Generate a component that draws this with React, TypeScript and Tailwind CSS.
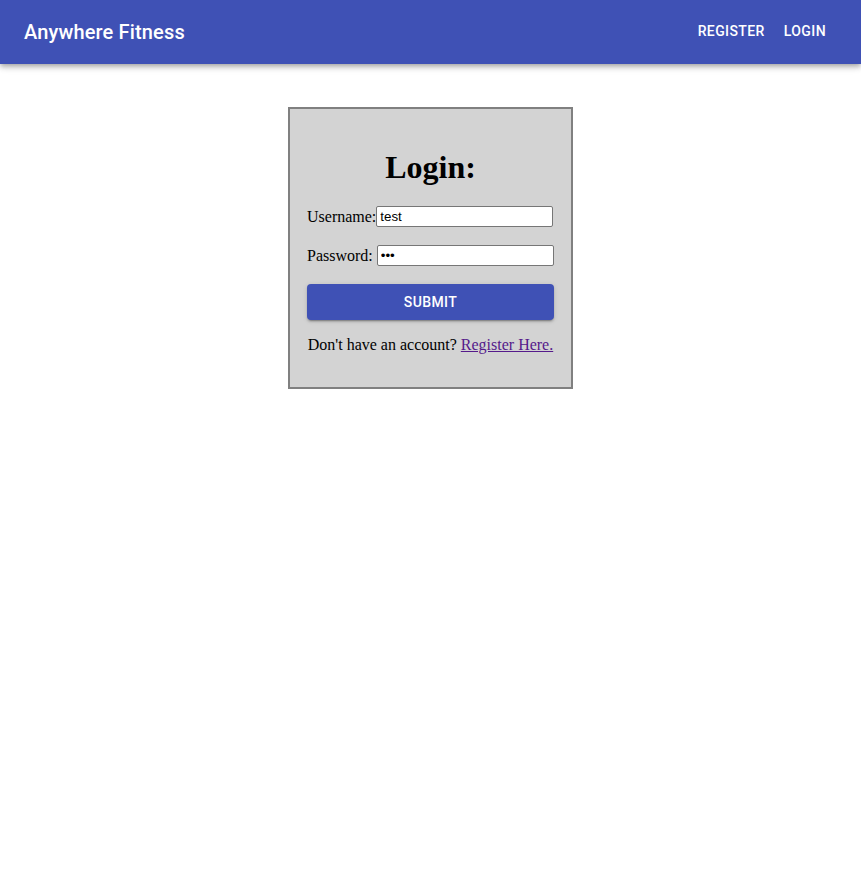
import React from "react";

const App = () => {
  return (
    <div className="min-h-[878px] bg-white">
      {/* App bar */}
      <header className="h-16 bg-[#3f51b5] text-white shadow-[0_2px_4px_-1px_rgba(0,0,0,0.2),0_4px_5px_0_rgba(0,0,0,0.14),0_1px_10px_0_rgba(0,0,0,0.12)]">
        <div className="flex h-full items-center justify-between pl-6 pr-[27px]">
          <h6 className="font-['Roboto',sans-serif] text-[20px] font-medium tracking-[0.0075em]">
            Anywhere Fitness
          </h6>
          <nav className="flex items-center gap-[3px] -mt-[2px]">
            <a className="px-2 py-[6px] font-['Roboto',sans-serif] text-[14px] font-medium uppercase tracking-[0.02857em]">
              Register
            </a>
            <a className="px-2 py-[6px] font-['Roboto',sans-serif] text-[14px] font-medium uppercase tracking-[0.02857em]">
              Login
            </a>
          </nav>
        </div>
      </header>

      {/* Login card */}
      <div className="flex justify-center pt-[43px]">
        <div className="w-[285px] border-2 border-[#808080] bg-[#d3d3d3] px-[17px] pt-[41px] pb-[33px] font-['Liberation_Serif',serif] text-[16px] leading-[18px] text-black">
          <h1 className="text-center text-[32px] font-bold leading-[35px]">Login:</h1>
          <div className="mt-[21px] flex items-center">
            <label>Username:</label>
            <input
              defaultValue="test"
              className="h-[21px] w-[177px] rounded-[2px] border border-[#767676] bg-white px-[3px] font-['Liberation_Sans',sans-serif] text-[13.33px] leading-normal outline-none"
            />
          </div>
          <div className="mt-[18px] flex items-center">
            <label className="mr-[4px]">Password:</label>
            <input
              type="password"
              defaultValue="abc"
              className="h-[21px] w-[177px] rounded-[2px] border border-[#767676] bg-white px-[3px] font-['Liberation_Sans',sans-serif] text-[13.33px] leading-normal outline-none"
            />
          </div>
          <button className="mt-[18px] h-9 w-[247px] rounded bg-[#3f51b5] font-['Roboto',sans-serif] text-[14px] font-medium uppercase tracking-[0.02857em] text-white shadow-[0_3px_1px_-2px_rgba(0,0,0,0.2),0_2px_2px_0_rgba(0,0,0,0.14),0_1px_5px_0_rgba(0,0,0,0.12)]">
            Submit
          </button>
          <p className="mt-[16px] text-center leading-[18px]">
            Don't have an account?{" "}
            <a href="#" className="text-[#551a8b] underline">
              Register Here.
            </a>
          </p>
        </div>
      </div>
    </div>
  );
};

export default App;
